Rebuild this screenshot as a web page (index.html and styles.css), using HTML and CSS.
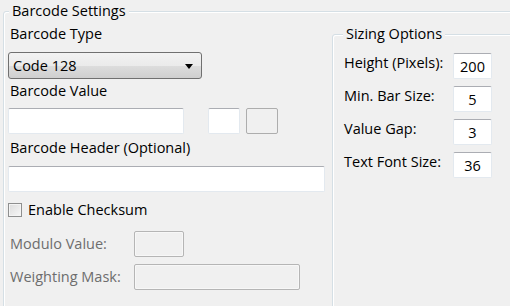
FILE: index.html
```html
<!DOCTYPE html>
<html lang="en">
<head>
  <meta charset="UTF-8">
  <title>Barcode Settings</title>
  <link rel="stylesheet" href="styles.css">
</head>
<body>
  <fieldset class="group settings">
    <legend>Barcode Settings</legend>
    <div class="columns">
      <!-- Left column: barcode fields -->
      <div class="main">
        <label class="field-label">Barcode Type</label>
        <div class="select">
          <span>Code 128</span>
          <span class="arrow"></span>
        </div>

        <label class="field-label value-label">Barcode Value</label>
        <div class="value-row">
          <input class="text value-input" type="text">
          <input class="text small" type="text">
          <input class="text small locked" type="text" disabled>
        </div>

        <label class="field-label header-label">Barcode Header (Optional)</label>
        <input class="text header-input" type="text">

        <label class="check">
          <span class="box"></span>
          Enable Checksum
        </label>

        <div class="opt-row modulo">
          <span class="opt-label">Modulo Value:</span>
          <span class="dead short"></span>
        </div>
        <div class="opt-row">
          <span class="opt-label">Weighting Mask:</span>
          <span class="dead long"></span>
        </div>
      </div>

      <!-- Right column: sizing -->
      <fieldset class="group sizing">
        <legend>Sizing Options</legend>
        <div class="size-row">
          <span class="size-label">Height (Pixels):</span>
          <input class="text num" type="text" value="200">
        </div>
        <div class="size-row">
          <span class="size-label">Min. Bar Size:</span>
          <input class="text num" type="text" value="5">
        </div>
        <div class="size-row">
          <span class="size-label">Value Gap:</span>
          <input class="text num" type="text" value="3">
        </div>
        <div class="size-row">
          <span class="size-label">Text Font Size:</span>
          <input class="text num" type="text" value="36">
        </div>
      </fieldset>
    </div>
  </fieldset>
</body>
</html>
```

FILE: styles.css
```css
/* Base */
* {
  box-sizing: border-box;
}

html, body {
  margin: 0;
  height: 306px;
  overflow: hidden;
}

body {
  padding: 1px 0 0 3px;
  background: #f0f0f0;
  font-family: "Open Sans", "Noto Sans", sans-serif;
  font-size: 14.5px;
  line-height: 20px;
  color: #000;
}

/* Group boxes */
.group {
  margin: 0;
  border: 1px solid #d5dfe5;
  border-radius: 3px;
  box-shadow: inset 1px 1px 0 #fff;
  min-width: 0;
}

.group legend {
  padding: 0 3px;
  margin-left: 1px;
  line-height: 20px;
  background: #f0f0f0;
}

.settings {
  height: 340px;
  margin-right: -30px;
  padding: 3px 0 0 4px;
}

.columns {
  display: flex;
  align-items: stretch;
  height: 100%;
}

/* Left column */
.main {
  width: 318px;
  display: flex;
  flex-direction: column;
  align-items: flex-start;
}

.field-label {
  display: block;
  padding-left: 2px;
}

.value-label {
  margin-top: 2px;
}

.header-label {
  margin-top: 4px;
}

.select {
  display: flex;
  align-items: center;
  justify-content: space-between;
  width: 194px;
  height: 27px;
  margin-top: 8px;
  padding: 0 8px 0 4px;
  border: 1px solid #707070;
  border-radius: 3px;
  background: linear-gradient(#f2f2f2 0%, #ebebeb 50%, #dddddd 51%, #cfcfcf 100%);
}

.arrow {
  width: 0;
  height: 0;
  border-left: 4px solid transparent;
  border-right: 4px solid transparent;
  border-top: 5px solid #000;
  margin-top: 1px;
}

.text {
  height: 26px;
  margin: 0;
  padding: 0 4px;
  border: 1px solid #e3e9ef;
  border-top-color: #abadb3;
  border-radius: 2px;
  background: #fff;
  font: inherit;
  color: #000;
  outline: none;
}

.value-row {
  display: flex;
  margin-top: 7px;
}

.value-input {
  width: 176px;
}

.small {
  width: 32px;
  margin-left: 24px;
}

.small.locked {
  margin-left: 6px;
  background: #f0f0f0;
  border-color: #adadad;
}

.header-input {
  width: 317px;
  margin-top: 8px;
}

/* Checkbox */
.check {
  display: flex;
  align-items: center;
  gap: 6px;
  margin-top: 8px;
}

.box {
  width: 14px;
  height: 14px;
  border: 1px solid #8e8f8f;
  background: linear-gradient(135deg, #dcdcdc, #f7f7f7);
  box-shadow: inset 0 0 0 1px #f4f4f4;
}

/* Disabled option rows */
.opt-row {
  display: flex;
  align-items: center;
  margin-top: 7px;
  color: #6d6d6d;
}

.opt-row.modulo {
  margin-top: 11px;
}

.opt-label {
  width: 126px;
  padding-left: 2px;
}

.dead {
  height: 26px;
  border: 1px solid #b5b5b5;
  border-radius: 2px;
  box-shadow: inset 0 0 0 1px #f7f7f7;
}

.short {
  width: 50px;
}

.long {
  width: 166px;
}

/* Right column */
.sizing {
  flex: 1;
  margin-left: 6px;
  padding: 9px 0 0 9px;
}

.size-row {
  display: flex;
  align-items: flex-start;
  margin-bottom: 7px;
}

.size-label {
  width: 111px;
  padding-left: 2px;
}

.num {
  width: 39px;
  text-align: center;
  padding: 0;
}
```
